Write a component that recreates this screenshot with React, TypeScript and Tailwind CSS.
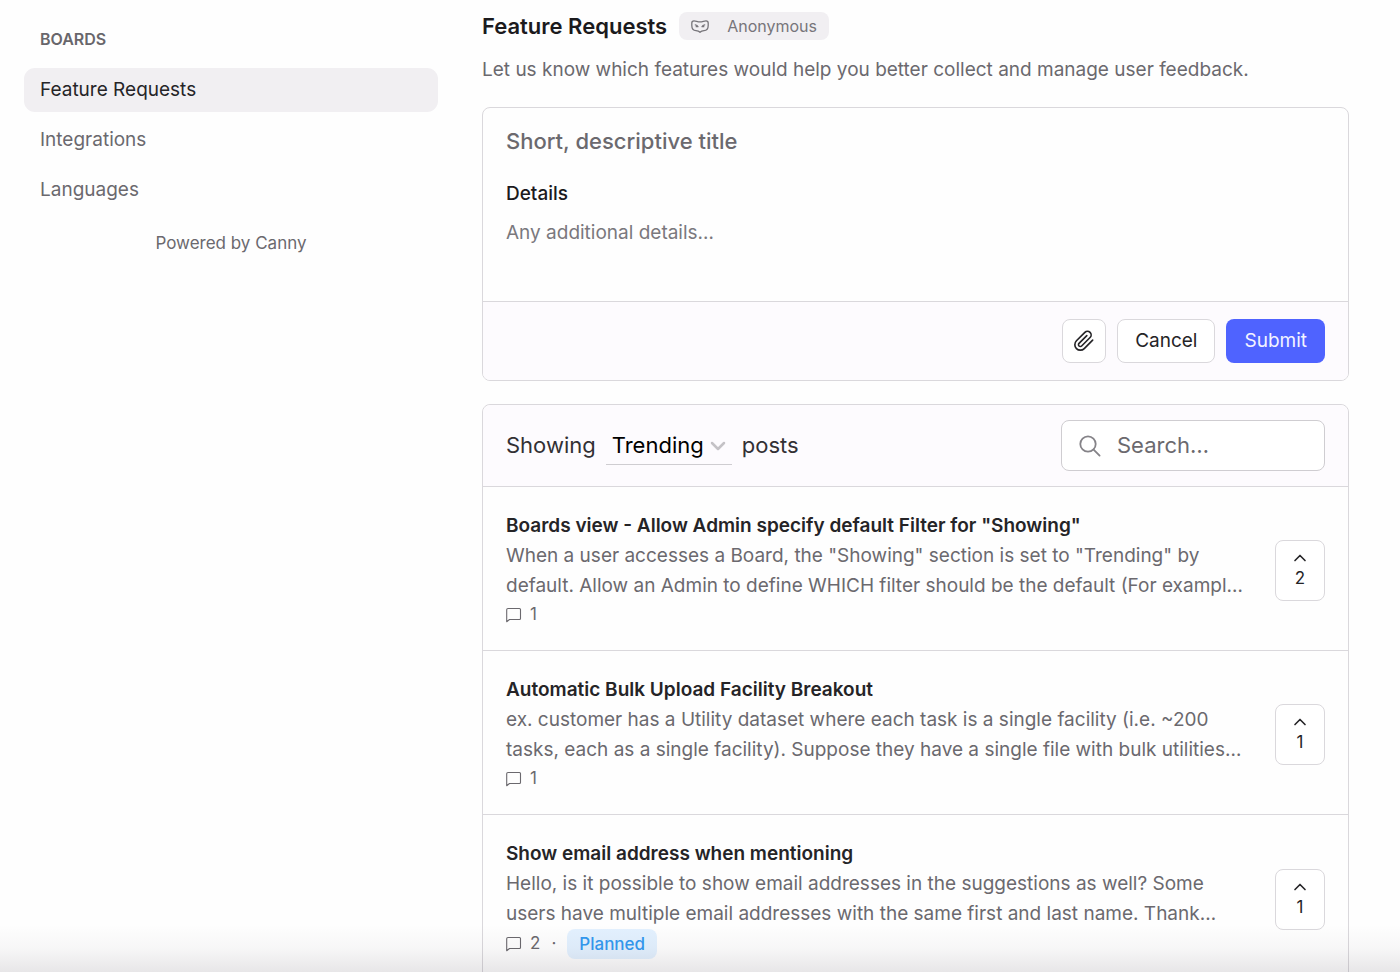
import React from 'react';
import { ChevronDown, ChevronUp } from 'lucide-react';
import { FiPaperclip } from 'react-icons/fi';

const boards = ['Feature Requests', 'Integrations', 'Languages'];

const posts = [
  {
    title: 'Boards view - Allow Admin specify default Filter for "Showing"',
    details:
      'When a user accesses a Board, the "Showing" section is set to "Trending" by default. Allow an Admin to define WHICH filter should be the default (For exampl…',
    comments: 1,
    votes: 2,
    status: ''
  },
  {
    title: 'Automatic Bulk Upload Facility Breakout',
    details:
      'ex. customer has a Utility dataset where each task is a single facility (i.e. ~200 tasks, each as a single facility). Suppose they have a single file with bulk utilities…',
    comments: 1,
    votes: 1,
    status: ''
  },
  {
    title: 'Show email address when mentioning',
    details:
      'Hello, is it possible to show email addresses in the suggestions as well? Some users have multiple email addresses with the same first and last name. Thank…',
    comments: 2,
    votes: 1,
    status: 'Planned'
  }
];

const MaskIcon = () => (
  <svg width="18" height="13" viewBox="0 0 18 13" fill="none" stroke="currentColor" strokeWidth="1.3" strokeLinecap="round" strokeLinejoin="round" aria-hidden="true">
    <path d="M3 .8C1.600.8.8 1.600.8 3v2.500c0 3 1.500 5 4.200 5.200 1.600.1 2.800.4 4 1.500 1.200-1.100 2.400-1.400 4-1.500 2.700-.2 4.200-2.200 4.200-5.200V3c0-1.400-.8-2.200-2.200-2.200-2 0-3.500 1.100-6 1.100S5 .8 3 .8Z" />
    <path d="M4.300 4.800c1.200.1 2.200.7 2.700 1.900M5.200 6.700h1.500M13.700 4.800c-1.200.1-2.200.7-2.700 1.900M12.800 6.700h-1.500" />
  </svg>
);

const SearchIcon = () => (
  <svg width="22" height="22" viewBox="0 0 22 22" fill="none" stroke="currentColor" strokeWidth="1.8" strokeLinecap="round" className="shrink-0 text-[#858388]" aria-hidden="true">
    <circle cx="9" cy="9" r="7.700" />
    <path d="m14.600 14.600 6 6" />
  </svg>
);

const CommentIcon = () => (
  <svg width="16" height="16" viewBox="0 0 16 16" fill="none" stroke="currentColor" strokeWidth="1.100" strokeLinejoin="round" aria-hidden="true">
    <path d="M2 1.500h11.500c.6 0 1 .4 1 1v9c0 .6-.4 1-1 1H3.500L.7 14.700V2.800c0-.8.5-1.300 1.300-1.300Z" />
  </svg>
);

const Sidebar = () => (
  <nav className="w-[414px] shrink-0 pt-6">
    <h2 className="px-4 text-[16px] leading-[30px] font-semibold text-[#68666b]">BOARDS</h2>
    <ul className="mt-[14px] flex flex-col gap-[6px]">
      {boards.map((board, index) => (
        <li key={board}>
          <a
            href="#"
            className={
              index === 0
                ? 'flex h-11 items-center rounded-[11px] bg-[#f1eff2] px-4 text-[19px] text-[#252427]'
                : 'flex h-11 items-center rounded-[11px] px-4 text-[19px] text-[#6b696e]'
            }
          >
            {board}
          </a>
        </li>
      ))}
    </ul>
    <a href="#" className="mt-4 block text-center text-[17px] leading-[30px] text-[#6b696e]">
      Powered by Canny
    </a>
  </nav>
);

const PostForm = () => (
  <form className="mt-[22px] overflow-hidden rounded-lg border border-[#dad8dc]">
    <div className="flex flex-col px-[23px] pt-[18px] pb-[23px]">
      <input
        type="text"
        aria-label="Title"
        placeholder="Short, descriptive title"
        className="h-[30px] text-[22px] font-medium outline-none placeholder:text-[#6b696e]"
      />
      <label htmlFor="details" className="mt-[23px] text-[19px] leading-[30px] font-medium text-[#1b1a1d]">
        Details
      </label>
      <textarea
        id="details"
        rows={2}
        placeholder="Any additional details…"
        className="mt-[9px] h-[60px] resize-none text-[19px] leading-[30px] outline-none placeholder:text-[#7a787d]"
      />
    </div>
    <div className="flex justify-end gap-[11px] border-t border-[#dad8dc] bg-[#fdfbfe] px-[23px] py-[17px]">
      <button type="button" aria-label="Attach file" className="flex size-11 items-center justify-center rounded-lg border border-[#dad8dc] bg-white text-[#252427]">
        <FiPaperclip size={22} strokeWidth={1.8} />
      </button>
      <button type="button" className="h-11 rounded-lg border border-[#dad8dc] bg-white px-[17px] text-[19px] text-[#252427]">
        Cancel
      </button>
      <button type="submit" className="h-11 rounded-lg bg-[#4f63ff] px-[18px] text-[19px] text-[#f3f3ff]">
        Submit
      </button>
    </div>
  </form>
);

const PostList = () => (
  <section className="mt-[23px] rounded-lg border border-[#dad8dc]">
    <div className="flex items-center justify-between rounded-t-lg bg-[#fdfbfe] px-[23px] py-[15px] text-[22px] text-[#323034]">
      <div className="flex items-center">
        <label htmlFor="sort">Showing</label>
        <div className="relative mx-[10px]">
          <select id="sort" className="h-[38px] w-[126px] appearance-none border-b border-[#cfcdd1] px-[6px] text-black outline-none">
            <option>Trending</option>
            <option>Top</option>
            <option>New</option>
          </select>
          <ChevronDown size={24} strokeWidth={2.5} className="pointer-events-none absolute top-[7px] right-[2px] text-[#c4c2c6]" />
        </div>
        posts
      </div>
      <div className="flex h-[51px] w-[264px] items-center rounded-lg border border-[#cfcdd1] bg-white px-[17px]">
        <SearchIcon />
        <input type="search" aria-label="Search posts" placeholder="Search…" className="ml-4 w-full min-w-0 outline-none placeholder:text-[#6b696e]" />
      </div>
    </div>
    {posts.map((post) => (
      <article key={post.title} className="flex items-center gap-[22px] border-t border-[#dad8dc] px-[23px] pt-6 pb-[21px]">
        <div className="min-w-0 flex-1">
          <h3 className="text-[19px] leading-[30px] font-semibold text-[#252427]">{post.title}</h3>
          <p className="text-[19px] leading-[30px] text-[#6b696e]">{post.details}</p>
          <div className="flex min-h-7 items-center text-[17px] text-[#6b696e]">
            <CommentIcon />
            <span className="ml-2">{post.comments}</span>
            {post.status && (
              <>
                <span className="mx-[11px]">·</span>
                <span className="rounded-lg bg-[#e3f1ff] px-3 text-[17px] leading-[30px] font-medium text-[#3399f0]">{post.status}</span>
              </>
            )}
          </div>
        </div>
        <button type="button" aria-label="Upvote" className="flex h-[61px] w-[50px] shrink-0 flex-col items-center justify-center rounded-lg border border-[#dad8dc] bg-white pb-1 text-[17px] leading-[21px] text-[#252427]">
          <ChevronUp size={20} strokeWidth={2} />
          {post.votes}
        </button>
      </article>
    ))}
  </section>
);

const App = () => {
  return (
    <div className="relative flex h-screen gap-11 overflow-hidden bg-[#fefefe] pr-[51px] pl-6 font-['Inter',sans-serif]">
      <Sidebar />
      <main className="min-w-0 flex-1 pt-[11px]">
        <div className="flex items-center gap-3">
          <h1 className="text-[22px] leading-[30px] font-semibold text-[#1b1a1d]">Feature Requests</h1>
          <span className="flex h-7 items-center gap-[18px] rounded-lg bg-[#f1eff2] px-3 text-[16px] text-[#77757a]">
            <MaskIcon />
            Anonymous
          </span>
        </div>
        <p className="mt-[14px] text-[19px] leading-[30px] text-[#6b696e]">
          Let us know which features would help you better collect and manage user feedback.
        </p>
        <PostForm />
        <PostList />
      </main>
      <div className="pointer-events-none absolute inset-x-0 bottom-0 h-12 bg-gradient-to-t from-[#1b0f20]/10 via-[#1b0f20]/3 to-transparent" />
    </div>
  );
};

export default App;
